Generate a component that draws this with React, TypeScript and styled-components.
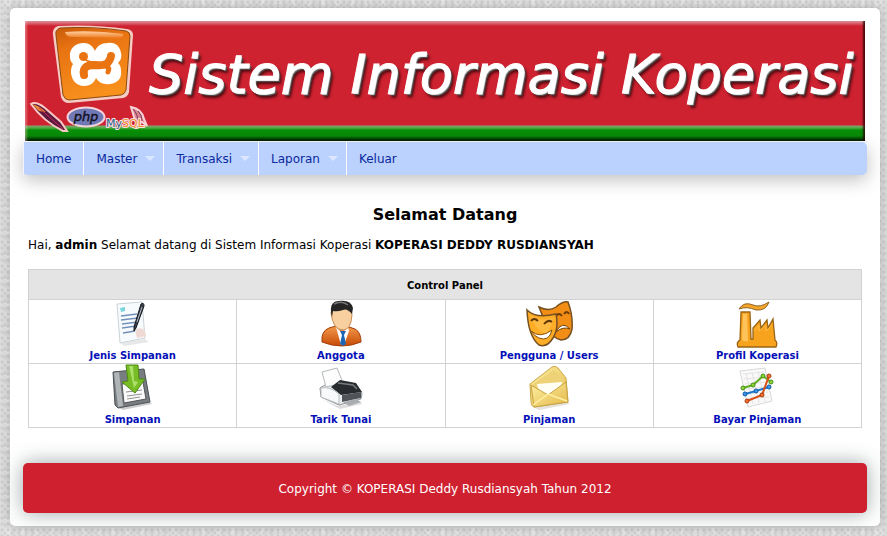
import React from "react";
import styled, { createGlobalStyle } from "styled-components";

const GlobalStyle = createGlobalStyle`
  * { box-sizing: border-box; }
  body {
    margin: 0;
    min-height: 100vh;
    font-family: Verdana, "DejaVu Sans", sans-serif;
    font-size: 12px;
    line-height: 16px;
    color: #000;
    background-color: #dfdfdf;
    background-image:
      radial-gradient(circle at 2px 2px, #d0d0d0 1px, transparent 2px),
      radial-gradient(circle at 5px 5px, #d3d3d3 1px, transparent 2px),
      radial-gradient(circle at 8px 3px, #ebebeb 2px, transparent 4px);
    background-size: 6px 6px, 7px 8px, 15px 12px;
  }
`;

const Page = styled.div`
  margin: 8px 7px 10px 10px;
  padding: 13px;
  background: #fff;
  border-radius: 5px;
  box-shadow: 0 0 12px rgba(0, 0, 0, 0.22);
  display: flow-root;
`;

const Banner = styled.header`
  display: flex;
  height: 120px;
  margin: 0 2px;
  background: linear-gradient(
    #dc9aa2 0, #d8505f 3px, #cf2231 5px, #cf2231 104px,
    #7fa56a 105px, #4fa845 107px, #089008 109px, #088a08 115px, #033f03 118px, #011c01 120px
  );
  box-shadow: inset 3px 0 2px -1px rgba(255, 200, 205, 0.4), inset -3px 0 2px -1px rgba(40, 0, 0, 0.8);
`;

const BannerLogo = styled.svg`
  flex: none;
  width: 124px;
  height: 120px;
`;

const BannerTitle = styled.h1`
  flex: 1;
  margin: 0;
  padding: 22px 12px 0 0;
  display: flex;
  justify-content: center;
  font: italic 400 54px/64px "DejaVu Sans", sans-serif;
  white-space: nowrap;
  color: #fff;
  -webkit-text-stroke: 1px #fff;
  text-shadow: 1px 1px 0 #ccc, 2px 2px 1px #555, 3px 4px 3px rgba(30, 0, 0, 0.8);
`;

const Menu = styled.nav`
  margin-top: 1px;
  background: #bbd1fe;
  border-radius: 0 5px 5px 5px;
  box-shadow: 0 5px 18px rgba(0, 0, 0, 0.25);
`;

const MenuList = styled.ul`
  display: flex;
  margin: 0;
  padding: 0;
  list-style: none;
  border-left: 1px solid #eef3ff;
`;

const MenuItem = styled.li<{ $last?: boolean }>`
  border-right: ${(p) => (p.$last ? "0" : "1px solid #fff")};
`;

const MenuLink = styled.a<{ $sub?: boolean }>`
  display: flex;
  align-items: center;
  gap: 8px;
  height: 33px;
  padding: 0 ${(p) => (p.$sub ? 8 : 12)}px 0 12px;
  color: #0a2a9c;
  text-decoration: none;
`;

const Caret = styled.span`
  border: 5px solid transparent;
  border-top-color: #dce8ff;
  border-bottom: 0;
`;

const Content = styled.main`
  padding: 30px 5px 35px;
`;

const Heading = styled.h2`
  margin: 0 0 12px;
  font-size: 16px;
  line-height: 20px;
  text-align: center;
`;

const Intro = styled.p`
  margin: 0 0 16px;
`;

const Panel = styled.table`
  width: 100%;
  table-layout: fixed;
  border-collapse: collapse;
  border: 1px solid #bbb;
  font-size: 10px;
  line-height: 15px;

  th, td { padding: 0; border: 1px solid #d2d2d2; text-align: center; }
  th { height: 30px; padding-top: 1px; background: #e4e4e4; }
  td { height: 64px; vertical-align: top; }
`;

const PanelLink = styled.a`
  display: flex;
  flex-direction: column;
  align-items: center;
  color: #0510b8;
  font-weight: bold;
  text-decoration: none;
`;

const Icon = styled.svg`
  width: 48px;
  height: 48px;
`;

const Footer = styled.footer`
  padding: 18px 16px 16px;
  background: #cf2030;
  border-radius: 5px;
  box-shadow: 0 0 20px rgba(40, 60, 60, 0.45);
  color: #fff;
  text-align: center;
`;

const XamppBanner = () => (
  <BannerLogo viewBox="0 0 124 120" aria-label="XAMPP, PHP and MySQL">
    <defs>
      <linearGradient id="plate" x1="0" y1="0" x2="0.3" y2="1">
        <stop offset="0" stopColor="#c95a08" />
        <stop offset="0.3" stopColor="#e87312" />
        <stop offset="1" stopColor="#f8901c" />
      </linearGradient>
      <linearGradient id="gloss" x1="0" y1="0" x2="0" y2="1">
        <stop offset="0" stopColor="#ffd0a0" />
        <stop offset="1" stopColor="#ee7a1e" />
      </linearGradient>
    </defs>
    <path d="M33 5 Q68 3 102 8 Q108 9 108 14 L104 71 Q103 76 98 77 L44 82 Q38 82 36 76 L28 14 Q27 7 33 5Z" fill="#f5ccc4" />
    <path d="M35 7 Q68 5 101 10 Q105 11 105 15 L101 69 Q100 73 96 74 L44 79 Q40 79 38 74 L31 14 Q30 9 35 7Z" fill="url(#plate)" stroke="#8c4a10" strokeWidth="1" />
    <path d="M40 11 Q70 9 98 13 Q99 17 94 17 L47 16 Q41 16 40 11Z" fill="url(#gloss)" />
    <path
      d="M70 30 C68 25 64 22 59 22 C50 22 44 28 45 36 C45 39 46 41 48 43 C46 46 46 49 46 52 C47 60 52 65 59 65 C65 65 69 62 71 57 C74 62 79 64 85 63 C93 62 97 57 96 50 C96 46 95 44 93 42 C96 39 97 36 96 32 C95 25 90 21 83 22 C76 22 72 25 70 30Z"
      fill="#fff"
    />
    <circle cx="58.5" cy="35.500" r="4.500" fill="#ea7412" />
    <path d="M58 36 C62 41 66 42 72 41" fill="none" stroke="#ea7412" strokeWidth="2" />
    <path d="M59 54 C57 45 64 44 70 44 C78 45 82 44 84 40 C86 37 86 36 86 35" fill="none" stroke="#ea7412" strokeWidth="8" strokeLinecap="round" />
    <path d="M81 45 Q85 47 83 51" fill="none" stroke="#ea7412" strokeWidth="5" strokeLinecap="round" />
    <path d="M6 83 Q11 80 20 87 L36 101 L42 110 L38 110 Q18 100 6 83Z" fill="#5c183e" stroke="#f7c8c4" strokeWidth="2" />
    <path d="M7 83 Q13 84 21 91 L14 90Z" fill="#ec8a34" />
    <path d="M14 87 L38 108" stroke="#c43054" strokeWidth="1" />
    <ellipse cx="61" cy="96" rx="18.5" ry="9.5" fill="#7078b6" stroke="#f5d4da" strokeWidth="2" />
    <text x="61" y="100" textAnchor="middle" fontFamily="DejaVu Sans, sans-serif" fontSize="13" fontStyle="italic" fill="#10101c" stroke="#10101c" strokeWidth="0.4">php</text>
    <path d="M106 86 Q117 88 119 98 L122 105 L117 101 L112 104 L109 96Z" fill="#d98592" stroke="#f7d3d6" strokeWidth="2" />
    <path d="M108 88 Q113 93 113 101 M113 90 Q117 94 117 100" fill="none" stroke="#7e3757" strokeWidth="1" />
    <g fontFamily="DejaVu Sans, sans-serif" fontSize="11" stroke="#f9dfe0" strokeWidth="2" paintOrder="stroke">
      <text x="81" y="106" fill="#2b5f8c">My<tspan fill="#ee8c2c">SQL</tspan></text>
    </g>
  </BannerLogo>
);

const DocumentIcon = () => (
  <Icon viewBox="0 0 48 48" aria-hidden="true">
    <path d="M12 43 L36 39 L40 42 L15 46Z" fill="#e8e8e8" />
    <path d="M8 4 L33 2 L36 38 L11 43Z" fill="#f8fbfd" stroke="#cbd3d8" />
    <path d="M11 8 L16 7 L16 11 L12 12Z" fill="#79d4dc" />
    <path d="M12 16 L28 14 M12 20 L29 18 M13 24 L29 22 M13 28 L27 26 M14 33 L26 31" stroke="#7391b8" strokeWidth="1.3" />
    <path d="M26 30 Q32 26 36 31 L37 36 L28 38Z" fill="#efd9d4" />
    <path d="M32 4 Q35 2 35 6 L27 28 L25 31 L25 27Z" fill="#3a3f49" stroke="#15181d" />
    <path d="M33 7 L28 22" stroke="#aeb9c7" />
  </Icon>
);

const PersonIcon = () => (
  <Icon viewBox="0 0 48 48" aria-hidden="true">
    <defs>
      <linearGradient id="suit" x1="0" y1="0" x2="0" y2="1">
        <stop offset="0" stopColor="#f39a4c" />
        <stop offset="1" stopColor="#c74a06" />
      </linearGradient>
    </defs>
    <path d="M5 42 Q4 31 12 28 L19 26 H29 L38 29 Q44 32 44 42 Q25 50 5 42Z" fill="url(#suit)" stroke="#a43d08" />
    <path d="M19 27 L25 33 L31 27 L32 31 L27 45 H24Z" fill="#fff" />
    <path d="M23 31 H29 L27 35 L29 44 L26 46 L23 44 L25 35Z" fill="#1c66b4" />
    <path d="M14 13 Q15 5 24 5 Q35 5 35 15 Q34 30 26 30 Q16 30 14 13Z" fill="#f8cf9f" stroke="#c98b52" />
    <path d="M15 17 Q11 2 21 1 Q34 -1 36 8 L35 14 Q30 8 26 10 Q20 12 16 11Z" fill="#252525" />
    <path d="M17 4 Q25 0 31 5" fill="none" stroke="#777" strokeWidth="1.5" />
  </Icon>
);

const MasksIcon = () => (
  <Icon viewBox="0 0 48 48" aria-hidden="true">
    <path d="M14 7 Q24 12 31 7 Q38 1 43 2 Q48 15 47 29 Q45 40 36 40 Q27 38 22 27Z" fill="#f28e16" stroke="#755022" strokeWidth="1.5" />
    <path d="M31 16 Q34 12 37 16 M39 14 Q42 10 44 14" fill="none" stroke="#6c3b06" strokeWidth="2" />
    <path d="M31 32 Q37 20 45 29 Q38 26 31 32Z" fill="#fff" stroke="#714108" />
    <path d="M2 10 Q11 19 31 14 Q34 28 28 38 Q22 48 14 45 Q3 36 2 10Z" fill="#ffad27" stroke="#775022" strokeWidth="1.5" />
    <path d="M5 15 Q14 22 28 18 Q27 27 21 34 Q10 30 5 15Z" fill="#ffc353" opacity=".6" />
    <path d="M6 21 Q9 17 13 21 M19 24 Q23 19 27 22" fill="none" stroke="#603806" strokeWidth="2" />
    <path d="M6 31 Q15 39 27 30 Q24 42 14 38 Q9 36 6 31Z" fill="#fff" stroke="#85500a" />
  </Icon>
);

const FactoryIcon = () => (
  <Icon viewBox="0 0 48 48" aria-hidden="true">
    <path d="M6 9 Q11 1 20 5 Q27 8 36 2 Q33 11 23 10 Q14 6 6 9Z" fill="#f4a62b" stroke="#906324" />
    <path d="M8 12 H17 L18 39 H20 V28 L27 20 L28 28 L34 20 L35 28 L40 19 L42 40 Q45 42 43 47 H5 Q3 42 7 40Z" fill="#f8a31e" stroke="#996515" strokeWidth="1.3" />
    <path d="M10 14 H14 L15 41 Q11 42 9 40Z" fill="#ffc35b" />
    <path d="M21 31 L26 25 V31 L33 25 V31 L39 25" fill="none" stroke="#ffb945" strokeWidth="1" />
  </Icon>
);

const SaveIcon = () => (
  <Icon viewBox="0 0 48 48" aria-hidden="true">
    <path d="M10 44 L41 38 L43 40 L14 46Z" fill="#ccc" />
    <path d="M4 8 L35 5 L41 38 L9 44 L6 41Z" fill="#777d80" stroke="#4a5053" />
    <path d="M5 9 L10 8 L14 42 L9 43Z" fill="#b0b6b8" />
    <path d="M13 20 L34 18 L37 35 L15 39Z" fill="#fafafa" stroke="#555" />
    <path d="M17 28 L33 26 M18 32 L33 30 M18 35 L31 33" stroke="#909090" />
    <path d="M17 1 L29 1 L30 15 L36 15 L26 29 L13 18 L19 17Z" fill="#78bd26" stroke="#4d8c12" />
    <path d="M20 2 L24 2 L25 17 L29 18 L25 24Z" fill="#b8e97a" opacity=".8" />
  </Icon>
);

const PrinterIcon = () => (
  <Icon viewBox="0 0 48 48" aria-hidden="true">
    <path d="M4 35 L21 42 L43 37 L45 40 L23 45Z" fill="#ddd" />
    <path d="M3 24 L17 16 L39 21 L45 29 L44 35 L22 41 L4 33Z" fill="#e9ebec" stroke="#8c9092" />
    <path d="M5 8 L20 4 L26 19 L9 23Z" fill="#fdfdfd" stroke="#b5babd" />
    <path d="M14 23 L23 16 L39 19 L45 28 L24 31Z" fill="#292c2f" />
    <path d="M21 19 L36 21 L40 25" fill="none" stroke="#767b80" strokeWidth="1.5" />
    <path d="M4 24 Q13 22 22 30 L22 40 L4 33Z" fill="#f8f9fa" stroke="#b9bdbf" />
    <path d="M25 31 L44 28 V34 L25 38Z" fill="#505458" />
    <path d="M26 38 L39 35 L44 38 L32 42Z" fill="#a9adb0" />
  </Icon>
);

const EnvelopeIcon = () => (
  <Icon viewBox="0 0 48 48" aria-hidden="true">
    <defs>
      <linearGradient id="mail" x1="0" y1="0" x2="1" y2="1">
        <stop offset="0" stopColor="#fff0a4" />
        <stop offset="1" stopColor="#e3b848" />
      </linearGradient>
    </defs>
    <path d="M8 43 L42 37 L45 40 L14 46Z" fill="#e4e2da" />
    <path d="M5 20 L27 3 Q30 1 33 4 L41 14 L43 38 L9 43 Q6 42 6 38Z" fill="url(#mail)" stroke="#cba84a" />
    <path d="M8 20 L29 6 L39 16 L40 24 L25 32 L9 28Z" fill="#eed278" />
    <path d="M12 20 L37 18 L36 24 L24 31 L14 28Z" fill="#fffef4" />
    <path d="M6 21 L23 31 L41 18 L43 38 L9 43Z" fill="url(#mail)" stroke="#c7a243" />
    <path d="M8 41 L23 30 L42 37" fill="none" stroke="#fff1a5" strokeWidth="1.5" />
  </Icon>
);

const ChartIcon = () => (
  <Icon viewBox="0 0 48 48" aria-hidden="true">
    <path d="M7 7 L32 4 L39 37 L15 43Z" fill="#f9f9f9" stroke="#d9d9d9" />
    <path d="M10 10 L31 8 M11 15 L32 13 M12 20 L33 18 M13 25 L34 23 M14 30 L35 28 M15 35 L36 33 M13 9 L20 40 M19 8 L26 39 M25 7 L32 38" stroke="#e4e4e4" />
    <g strokeWidth="2" fill="none">
      <path d="M10 24 L20 21 L30 12 L38 18" stroke="#62ad20" />
      <path d="M12 30 L23 27 L36 23" stroke="#1f76cf" />
      <path d="M14 37 L29 31 L36 12" stroke="#da5018" />
    </g>
    <g fill="#8bd333" stroke="#46901b"><circle cx="10" cy="24" r="2" /><circle cx="20" cy="21" r="2" /><circle cx="30" cy="12" r="2" /><circle cx="38" cy="18" r="2" /></g>
    <g fill="#3499ed" stroke="#165aa4"><circle cx="12" cy="30" r="2" /><circle cx="23" cy="27" r="2" /><circle cx="36" cy="23" r="2" /></g>
    <g fill="#f07036" stroke="#ae3a0c"><circle cx="14" cy="37" r="2" /><circle cx="29" cy="31" r="2" /><circle cx="36" cy="12" r="2" /></g>
  </Icon>
);

const menu = [
  { label: "Home" },
  { label: "Master", sub: true },
  { label: "Transaksi", sub: true },
  { label: "Laporan", sub: true },
  { label: "Keluar" },
];

const panelRows = [
  [
    { label: "Jenis Simpanan", Art: DocumentIcon },
    { label: "Anggota", Art: PersonIcon },
    { label: "Pengguna / Users", Art: MasksIcon },
    { label: "Profil Koperasi", Art: FactoryIcon },
  ],
  [
    { label: "Simpanan", Art: SaveIcon },
    { label: "Tarik Tunai", Art: PrinterIcon },
    { label: "Pinjaman", Art: EnvelopeIcon },
    { label: "Bayar Pinjaman", Art: ChartIcon },
  ],
];

export default function App() {
  return (
    <>
      <GlobalStyle />
      <Page>
        <Banner>
          <XamppBanner />
          <BannerTitle>Sistem Informasi Koperasi</BannerTitle>
        </Banner>
        <Menu>
          <MenuList>
            {menu.map(({ label, sub }, i) => (
              <MenuItem key={label} $last={i === menu.length - 1}>
                <MenuLink href="#" $sub={sub}>
                  {label}
                  {sub && <Caret />}
                </MenuLink>
              </MenuItem>
            ))}
          </MenuList>
        </Menu>
        <Content>
          <Heading>Selamat Datang</Heading>
          <Intro>
            Hai, <b>admin</b> Selamat datang di Sistem Informasi Koperasi <b>KOPERASI DEDDY RUSDIANSYAH</b>
          </Intro>
          <Panel>
            <thead>
              <tr><th colSpan={4}>Control Panel</th></tr>
            </thead>
            <tbody>
              {panelRows.map((row, i) => (
                <tr key={i}>
                  {row.map(({ label, Art }) => (
                    <td key={label}>
                      <PanelLink href="#"><Art />{label}</PanelLink>
                    </td>
                  ))}
                </tr>
              ))}
            </tbody>
          </Panel>
        </Content>
        <Footer>Copyright © KOPERASI Deddy Rusdiansyah Tahun 2012</Footer>
      </Page>
    </>
  );
}
